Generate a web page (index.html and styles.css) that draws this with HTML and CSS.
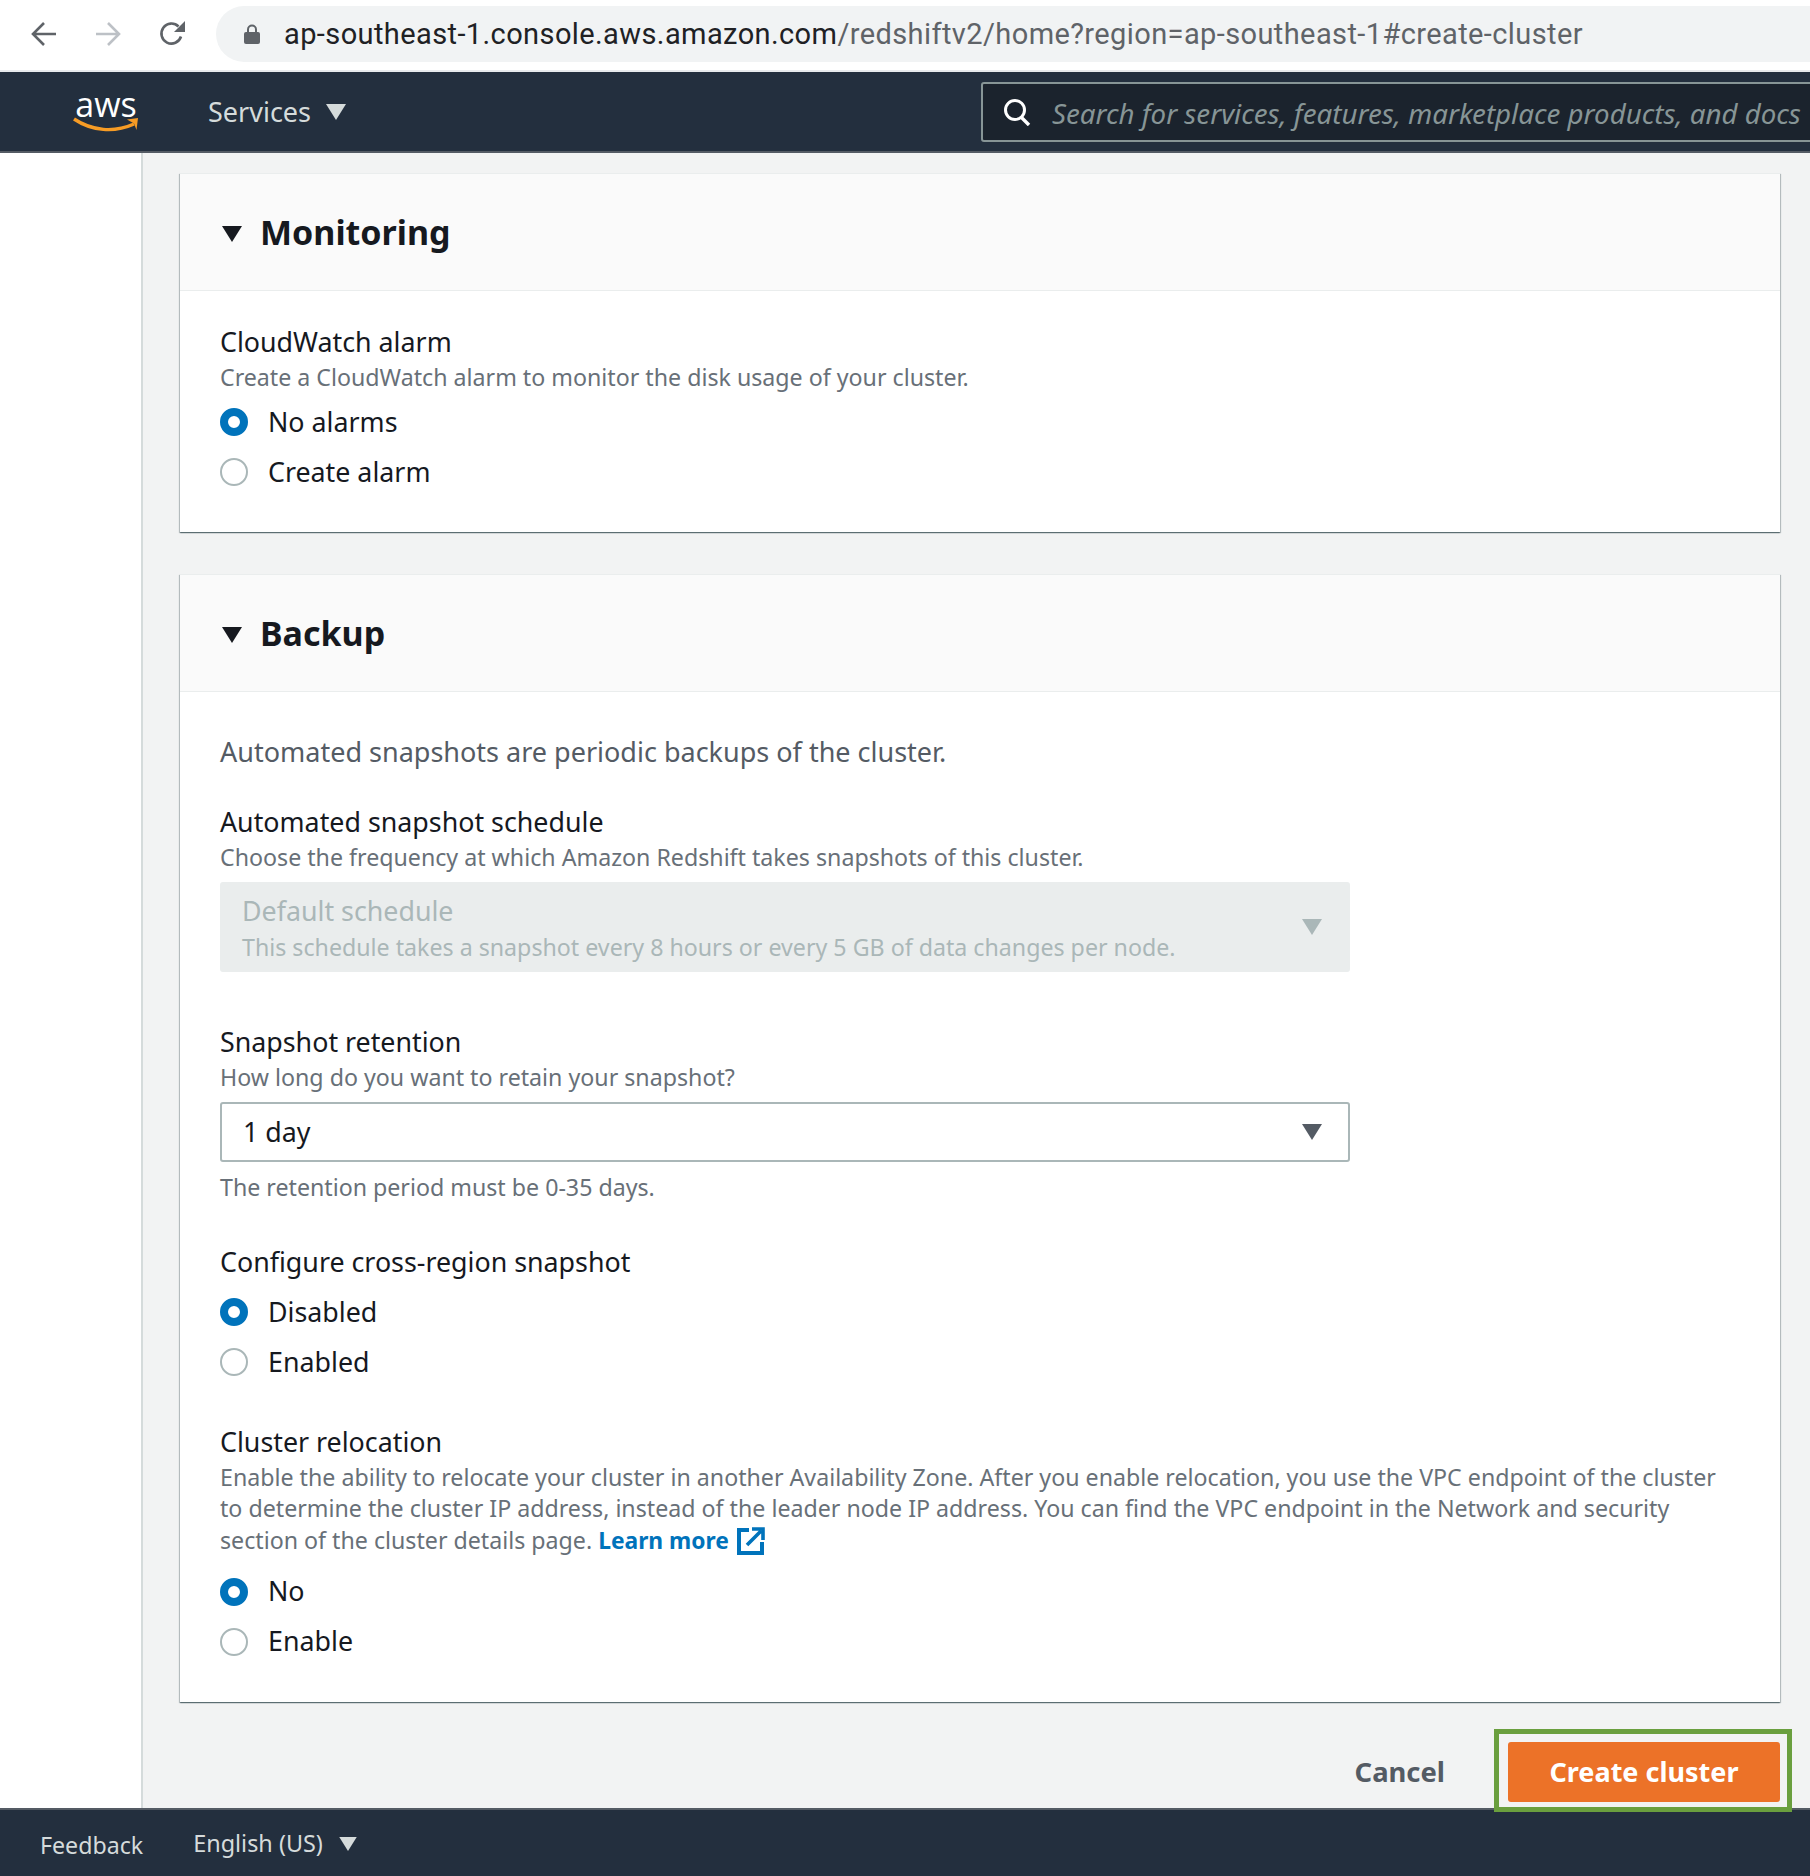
FILE: index.html
```html
<!DOCTYPE html>
<html lang="en">
<head>
<meta charset="utf-8">
<title>Create cluster</title>
<link rel="stylesheet" href="styles.css">
</head>
<body>
<div class="page">
  <header class="browser">
    <svg class="nav-icon" viewBox="0 0 26 26"><path d="M25 13H3M13 2 2 13l11 11" fill="none" stroke="#5f6368" stroke-width="2.6"/></svg>
    <svg class="nav-icon" viewBox="0 0 26 26"><path d="M1 13h22M13 2l11 11-11 11" fill="none" stroke="#bdc1c6" stroke-width="2.6"/></svg>
    <svg class="nav-icon" viewBox="0 0 26 26"><path d="M22 15.500A10 10 0 1 1 19.500 5.500" fill="none" stroke="#5f6368" stroke-width="2.600"/><path d="M26 0v11H15z" fill="#5f6368"/></svg>
    <div class="address">
      <svg class="lock" viewBox="0 0 16 20"><path d="M4 9V5.500a4 4 0 0 1 8 0V9" fill="none" stroke="#5f6368" stroke-width="2"/><rect x="0" y="8" width="16" height="12" rx="2" fill="#5f6368"/></svg>
      <span class="url"><span class="url-host">ap-southeast-1.console.aws.amazon.com</span>/redshiftv2/home?region=ap-southeast-1#create-cluster</span>
    </div>
  </header>

  <nav class="topbar">
    <div class="logo">
      <span class="logo-word">aws</span>
      <svg class="logo-smile" viewBox="0 0 66 16"><path d="M1 2c18 12 40 14 60 5" fill="none" stroke="#f79c25" stroke-width="3.400"/><path d="M54 2.500 65 1l-1.500 12-2.500-6.500z" fill="#f79c25"/></svg>
    </div>
    <span class="services">Services</span>
    <svg class="caret caret-nav" viewBox="0 0 20 16"><path d="M0 0h20L10 16z" fill="#d5dbdb"/></svg>
    <div class="search">
      <svg class="search-icon" viewBox="0 0 28 28"><circle cx="12" cy="12" r="9.500" fill="none" stroke="#fff" stroke-width="3"/><path d="m18 19 8 8" stroke="#fff" stroke-width="3.400"/></svg>
      <span class="search-text">Search for services, features, marketplace products, and docs</span>
    </div>
  </nav>

  <div class="shell">
    <aside class="sidebar"></aside>
    <main class="content">
      <section class="card">
        <div class="card-head">
          <svg class="caret caret-head" viewBox="0 0 20 16"><path d="M0 0h20L10 16z" fill="#16191f"/></svg>
          <h2>Monitoring</h2>
        </div>
        <div class="card-body">
          <div class="label">CloudWatch alarm</div>
          <div class="desc">Create a CloudWatch alarm to monitor the disk usage of your cluster.</div>
          <div class="radios">
            <div class="radio"><span class="dot dot-on"></span>No alarms</div>
            <div class="radio"><span class="dot"></span>Create alarm</div>
          </div>
        </div>
      </section>

      <section class="card card-next">
        <div class="card-head">
          <svg class="caret caret-head" viewBox="0 0 20 16"><path d="M0 0h20L10 16z" fill="#16191f"/></svg>
          <h2>Backup</h2>
        </div>
        <div class="card-body">
          <div class="intro">Automated snapshots are periodic backups of the cluster.</div>

          <div class="field field-first">
            <div class="label">Automated snapshot schedule</div>
            <div class="desc">Choose the frequency at which Amazon Redshift takes snapshots of this cluster.</div>
            <div class="select select-disabled">
              <div class="select-text">
                <div class="select-title">Default schedule</div>
                <div class="select-sub">This schedule takes a snapshot every 8 hours or every 5 GB of data changes per node.</div>
              </div>
              <svg class="caret" viewBox="0 0 20 16"><path d="M0 0h20L10 16z" fill="#aab7b8"/></svg>
            </div>
          </div>

          <div class="field field-wide">
            <div class="label">Snapshot retention</div>
            <div class="desc">How long do you want to retain your snapshot?</div>
            <div class="select">
              <div class="select-value">1 day</div>
              <svg class="caret" viewBox="0 0 20 16"><path d="M0 0h20L10 16z" fill="#545b64"/></svg>
            </div>
            <div class="desc hint">The retention period must be 0-35 days.</div>
          </div>

          <div class="field">
            <div class="label">Configure cross-region snapshot</div>
            <div class="radios radios-tight">
              <div class="radio"><span class="dot dot-on"></span>Disabled</div>
              <div class="radio"><span class="dot"></span>Enabled</div>
            </div>
          </div>

          <div class="field field-mid">
            <div class="label">Cluster relocation</div>
            <div class="desc desc-para">Enable the ability to relocate your cluster in another Availability Zone. After you enable relocation, you use the VPC endpoint of the cluster to determine the cluster IP address, instead of the leader node IP address. You can find the VPC endpoint in the Network and security section of the cluster details page. <a class="link">Learn more</a><svg class="ext" viewBox="0 0 28 28"><path d="M12 3H2v23h23V15" fill="none" stroke="#0073bb" stroke-width="4"/><path d="M10 18 24 4M15 2h11v11" fill="none" stroke="#0073bb" stroke-width="3.600"/></svg></div>
            <div class="radios radios-para">
              <div class="radio"><span class="dot dot-on"></span>No</div>
              <div class="radio"><span class="dot"></span>Enable</div>
            </div>
          </div>
        </div>
      </section>

      <div class="actions">
        <span class="cancel">Cancel</span>
        <div class="primary-wrap">
          <span class="primary">Create cluster</span>
          <span class="highlight"></span>
        </div>
      </div>
    </main>
  </div>

  <footer class="footer">
    <span class="feedback">Feedback</span>
    <span class="lang">English (US)</span>
    <svg class="caret caret-foot" viewBox="0 0 20 16"><path d="M0 0h20L10 16z" fill="#d5dbdb"/></svg>
  </footer>
</div>
</body>
</html>
```

FILE: styles.css
```css
* { box-sizing: border-box; }
html, body { margin: 0; padding: 0; }
body { background: #fff; color: #16191f; font-family: "Noto Sans", "Open Sans", sans-serif; font-size: 26px; }
.page { width: 1810px; height: 1876px; display: flex; flex-direction: column; overflow: hidden; }

/* browser chrome */
.browser { height: 72px; flex: none; display: flex; align-items: flex-start; background: #fff; padding: 21px 0 0 31px; border-bottom: 2px solid #e8eaed; position: relative; }
.nav-icon { width: 26px; height: 26px; margin-right: 38px; flex: none; }
.address { position: absolute; left: 216px; top: 6px; right: 0; height: 56px; background: #f1f3f4; border-radius: 28px 0 0 28px; display: flex; align-items: center; padding-left: 28px; }
.lock { width: 16px; height: 20px; flex: none; }
.url { margin-left: 24px; font-family: Roboto, sans-serif; font-size: 29px; color: #5f6368; white-space: nowrap; letter-spacing: 0.4px; }
.url-host { color: #202124; }

/* top nav */
.topbar { height: 81px; flex: none; background: #232f3e; border-bottom: 2px solid #545b64; display: flex; align-items: center; position: relative; }
.logo { width: 66px; margin-left: 73px; display: flex; flex-direction: column; align-items: center; height: 42px; }
.logo-word { font-family: "Open Sans", sans-serif; font-size: 34px; font-weight: 500; line-height: 26px; color: #fff; letter-spacing: 0; }
.logo-smile { width: 66px; height: 16px; }
.services { margin-left: 69px; color: #d5dbdb; font-size: 27px; }
.caret { width: 20px; height: 16px; flex: none; }
.caret-nav { margin-left: 15px; }
.search { position: absolute; left: 981px; top: 10px; right: -4px; height: 60px; background: #1b232d; border: 2px solid #879596; border-radius: 3px; display: flex; align-items: center; padding-left: 20px; }
.search-icon { width: 28px; height: 28px; flex: none; }
.search-text { margin-left: 21px; color: #879596; font-style: italic; font-size: 27.700px; white-space: nowrap; padding-top: 2px; }

/* shell */
.shell { flex: 1; display: flex; min-height: 0; }
.sidebar { width: 143px; flex: none; background: #fff; border-right: 2px solid #d5dbdb; }
.content { flex: 1; background: #f2f3f3; padding: 20px 30px 0 37px; min-width: 0; }

/* cards */
.card { background: #fff; border-top: 1px solid #eaeded; box-shadow: 0 1px 1px 0 rgba(0,28,36,.4), 1px 1px 1px 0 rgba(0,28,36,.2), -1px 1px 1px 0 rgba(0,28,36,.2); }
.card-next { margin-top: 42px; }
.card-head { height: 117px; background: #fafafa; border-bottom: 1px solid #eaeded; display: flex; align-items: center; padding-left: 42px; }
.caret-head { position: relative; top: 2px; }
.card-head h2 { margin: 0 0 0 18px; font-size: 34px; line-height: 44px; font-weight: 700; color: #16191f; }
.card-body { padding: 34px 40px 46px; }

.label { font-size: 26.800px; line-height: 34px; color: #16191f; }
.desc { font-size: 23.200px; line-height: 30px; color: #687078; margin-top: 3px; }
.intro { font-size: 27px; line-height: 34px; color: #545b64; margin-top: 9px; }
.field { margin-top: 43px; }
.field-first { margin-top: 36px; }
.field-wide { margin-top: 53px; }
.field-mid { margin-top: 49px; }
.hint { margin-top: 10px; }
.desc-para { line-height: 31.300px; margin-top: 3px; }
.link { color: #0073bb; font-weight: 700; font-size: 22.800px; }
.ext { width: 28px; height: 28px; margin-left: 8px; vertical-align: -6px; }

.radios { margin-top: 16px; display: flex; flex-direction: column; gap: 22px; }
.radios-tight { margin-top: 19px; }
.radios-para { margin-top: 22px; }
.radio { height: 28px; padding-bottom: 2px; display: flex; align-items: center; font-size: 26.800px; color: #16191f; }
.dot { width: 28px; height: 28px; margin-bottom: -2px; border-radius: 50%; border: 2px solid #aab7b8; background: #fff; margin-right: 20px; flex: none; }
.dot-on { border: 8.500px solid #0073bb; }

/* selects */
.select { width: 1130px; height: 60px; margin-top: 10px; border: 2px solid #aab7b8; border-radius: 3px; display: flex; align-items: center; justify-content: space-between; padding: 0 26px 0 21px; background: #fff; }
.select-disabled { height: 90px; background: #eaeded; border: 0; padding-left: 22px; padding-right: 28px; }
.select-text { padding-top: 2px; }
.select-title { font-size: 26.800px; line-height: 34px; color: #aab7b8; }
.select-sub { font-size: 23.200px; line-height: 30px; color: #aab7b8; margin-top: 4px; }
.select-value { font-size: 26.800px; color: #16191f; padding-bottom: 2px; }

/* actions */
.actions { display: flex; justify-content: flex-end; align-items: center; margin-top: 40px; height: 60px; }
.cancel { font-size: 27.400px; font-weight: 700; color: #545b64; margin-right: 63px; }
.primary-wrap { position: relative; }
.primary { display: flex; align-items: center; justify-content: center; width: 272px; height: 60px; background: #ec7228; border-radius: 3px; color: #fff; font-size: 27px; font-weight: 700; }
.highlight { position: absolute; z-index: 1; left: -14px; right: -12px; top: -13px; bottom: -10px; border: 5px solid #6a9f3e; pointer-events: none; }

/* footer */
.footer { height: 68px; flex: none; background: #232f3e; border-top: 2px solid #545b64; display: flex; align-items: center; padding-left: 40px; color: #d5dbdb; font-size: 23.400px; position: relative; }
.feedback { position: relative; top: 2px; font-size: 23.200px; }
.lang { margin-left: 50px; }
.caret-foot { margin-left: 16px; width: 18px; height: 14px; position: relative; top: 1px; }
```
